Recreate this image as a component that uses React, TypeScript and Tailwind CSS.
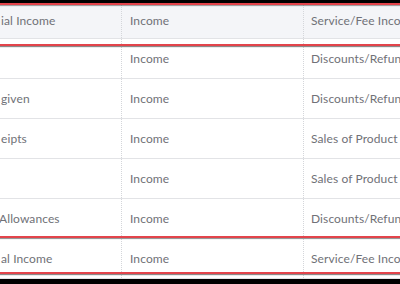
import React from "react";

type Account = {
  name: string;
  type: string;
  detail: string;
};

const header: Account = {
  name: "ial Income",
  type: "Income",
  detail: "Service/Fee Income",
};

const accounts: Account[] = [
  { name: "", type: "Income", detail: "Discounts/Refunds Given" },
  { name: "given", type: "Income", detail: "Discounts/Refunds Given" },
  { name: "eipts", type: "Income", detail: "Sales of Product Income" },
  { name: "", type: "Income", detail: "Sales of Product Income" },
  { name: "Allowances", type: "Income", detail: "Discounts/Refunds Given" },
  { name: "al Income", type: "Income", detail: "Service/Fee Income" },
];

const Row = ({ row, head }: { row: Account; head?: boolean }) => (
  <div
    className={
      "flex items-center border-b border-[#e2e3e6] " +
      (head ? "h-[36px] bg-[#f4f5f8]" : "h-[40px] bg-white")
    }
  >
    <div className="w-[121px] shrink-0 h-full flex items-center overflow-hidden whitespace-nowrap pl-[1px]">
      <span className={row.name === "Allowances" ? "-ml-[2px]" : ""}>{row.name}</span>
    </div>
    <div className="w-[182px] shrink-0 h-full flex items-center border-l border-dotted border-[#d4d6da] pl-[8px] whitespace-nowrap">
      {row.type}
    </div>
    <div className="flex-1 h-full flex items-center border-l border-dotted border-[#d4d6da] pl-[7px] whitespace-nowrap overflow-hidden">
      {row.detail}
    </div>
  </div>
);

// red callout box drawn over the table
const Highlight = ({ top, height }: { top: number; height: number }) => (
  <div
    className="absolute left-[-10px] right-[-10px] border-y-[2px] border-[#e3444b] shadow-[0_1px_1px_rgba(60,60,60,0.6),inset_0_1px_1px_rgba(60,60,60,0.5)]"
    style={{ top, height }}
  />
);

const App = () => {
  return (
    <div className="relative w-[400px] h-[284px] bg-black overflow-hidden pt-[3px] font-['Lato',sans-serif] text-[12px] tracking-[0.1px] text-[#707177]">
      <div className="bg-white">
        <Row row={header} head />
        {accounts.map((a, i) => (
          <Row key={i} row={a} />
        ))}
      </div>
      <Highlight top={3} height={43} />
      <Highlight top={236} height={38} />
    </div>
  );
};

export default App;
